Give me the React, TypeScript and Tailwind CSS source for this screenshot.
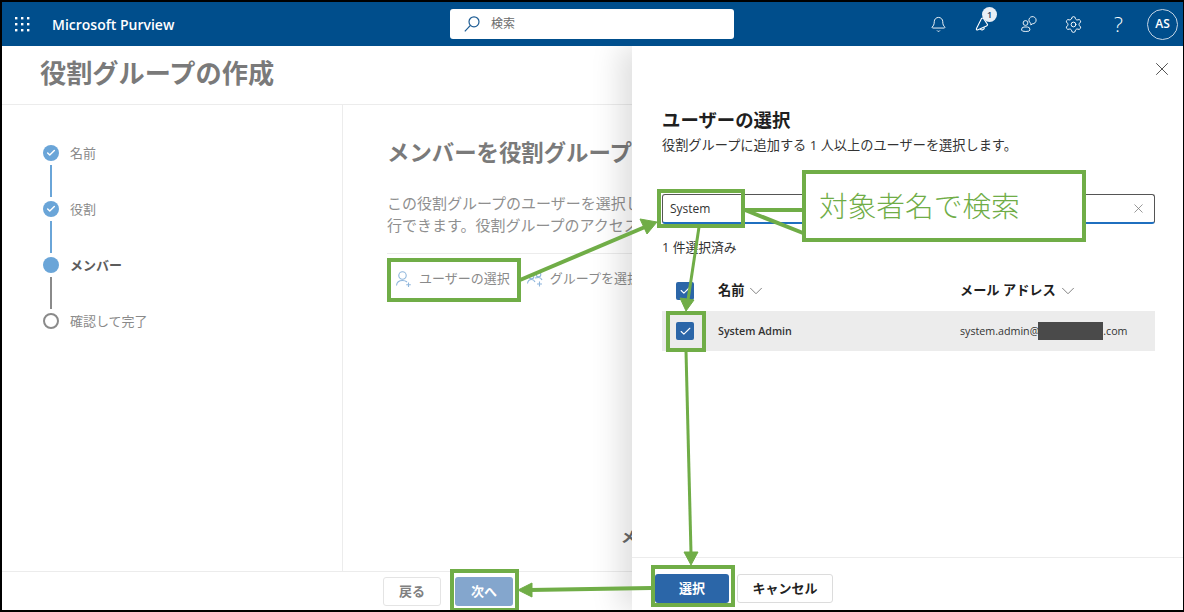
import React from "react";
import { Bell, Settings, X, Check, ChevronDown } from "lucide-react";

const G = "#70ad47";

function Box({ cls }: { cls: string }) {
  return <div className={`absolute border-[4px] border-[#70ad47] ${cls}`} />;
}

function Waffle() {
  return (
    <svg width="16" height="16" viewBox="0 0 16 16" fill="white">
      {[1, 7, 13].map((y) =>
        [1, 7, 13].map((x) => <rect key={`${x}-${y}`} x={x} y={y} width="2.4" height="2.4" />)
      )}
    </svg>
  );
}

function SearchGlyph() {
  return (
    <svg width="18" height="18" viewBox="0 0 18 18" fill="none" stroke="#1d5c94" strokeWidth="1.2">
      <circle cx="11" cy="6.8" r="5" />
      <path d="M7.4 10.4 L1.8 16.4" />
    </svg>
  );
}

function Megaphone() {
  return (
    <svg width="20" height="20" viewBox="0 0 20 20" fill="none" stroke="white" strokeWidth="1.1">
      <path d="M2.5 14.5 L7.5 4.5 Q8.5 3.5 9.5 4.5 L13.5 10.5 Q13.5 11.5 12.5 12 L3.5 16 Q2 16 2.5 14.5Z" />
      <path d="M6 15 A2.6 2.6 0 0 0 10.5 13.5" />
    </svg>
  );
}

function People() {
  return (
    <svg width="18" height="18" viewBox="0 0 18 18" fill="none" stroke="white" strokeWidth="0.9">
      <circle cx="5.5" cy="8" r="2.4" />
      <path d="M1.5 15 Q1.5 12 4 12 H7.5 Q10 12 10 15 Q10 16.5 5.8 16.5 Q1.5 16.5 1.5 15Z" />
      <path d="M9 6 A3.6 3.6 0 1 1 12.5 8.8 L10.8 10 L11 8.4 A3.6 3.6 0 0 1 9 6Z" />
    </svg>
  );
}

function UserPlus() {
  return (
    <svg width="18" height="18" viewBox="0 0 18 18" fill="none" stroke="#8fb6dc" strokeWidth="1.1">
      <circle cx="7.5" cy="5.5" r="3.7" />
      <path d="M1.5 15.5 Q2 10.5 7.5 10.5 Q10.5 10.5 12 12" />
      <path d="M13.5 12.5 V17 M11.2 14.8 H15.8" />
    </svg>
  );
}

function GroupPlus() {
  return (
    <svg width="18" height="18" viewBox="0 0 18 18" fill="none" stroke="#8fb6dc" strokeWidth="1.1">
      <circle cx="5.5" cy="6.5" r="2.3" />
      <circle cx="12.5" cy="4.5" r="2.3" />
      <path d="M1.5 13.5 Q2 9.5 5.5 9.5 Q8 9.5 9 12" />
      <path d="M9 8 Q10.5 7.5 12.5 7.5 Q15 7.5 16 10" />
      <path d="M13.5 11.5 V16.5 M11 14 H16" />
    </svg>
  );
}

function StepDot({ kind }: { kind: "done" | "current" | "todo" }) {
  if (kind === "todo") {
    return <div className="w-[16px] h-[16px] rounded-full border-[2px] border-[#8a8a8a] bg-white" />;
  }
  return (
    <div className="w-[16px] h-[16px] rounded-full bg-[#6aa5d8] flex items-center justify-center">
      {kind === "done" && <Check size={10} color="white" strokeWidth={3.5} />}
    </div>
  );
}

const steps: { label: string; kind: "done" | "current" | "todo"; line?: string }[] = [
  { label: "名前", kind: "done", line: "bg-[#6aa5d8]" },
  { label: "役割", kind: "done", line: "bg-[#6aa5d8]" },
  { label: "メンバー", kind: "current", line: "bg-[#8a8a8a]" },
  { label: "確認して完了", kind: "todo" },
];

function CheckBox() {
  return (
    <div className="w-[18px] h-[18px] rounded-[2px] bg-[#2b66a8] flex items-center justify-center">
      <Check size={13} color="white" strokeWidth={2} />
    </div>
  );
}

export default function App() {
  return (
    <div className="relative w-[1184px] h-[612px] overflow-hidden bg-white flex flex-col border-t-2 border-l-2 border-b-2 border-r border-black font-['Open_Sans','Noto_Sans_CJK_JP',sans-serif]">
      {/* Top bar */}
      <header className="relative z-20 h-[44px] shrink-0 bg-[#004e8c] flex items-center text-white">
        <div className="w-[50px] pl-[12px] flex items-center"><Waffle /></div>
        <div className="w-[123px] text-[14px] font-semibold whitespace-nowrap">Microsoft Purview</div>
        <div className="ml-[275px] w-[284px] h-[30px] bg-white rounded-[3px] flex items-center pl-[13px] gap-[10px] text-[#6b6b6b] text-[12px]">
          <SearchGlyph />
          <span>検索</span>
        </div>
        <div className="flex-1" />
        <div className="flex items-center">
          <div className="w-[45px] flex justify-center"><Bell size={17} color="white" strokeWidth={1.3} /></div>
          <div className="relative w-[45px] flex justify-center">
            <Megaphone />
            <div className="absolute -top-[7px] left-[21px] w-[15px] h-[15px] rounded-full bg-[#e8eef5] text-[#1b3a5c] text-[9px] font-semibold flex items-center justify-center">1</div>
          </div>
          <div className="w-[45px] flex justify-center"><People /></div>
          <div className="w-[45px] flex justify-center"><Settings size={19} color="white" strokeWidth={1.2} /></div>
          <div className="w-[45px] flex justify-center text-[21px] font-light leading-none">?</div>
          <div className="w-[31px] h-[31px] ml-[6px] mr-[5px] rounded-full border border-[#c5d5e5] flex items-center justify-center text-[12px] font-semibold">AS</div>
        </div>
      </header>

      {/* Title */}
      <div className="h-[59px] shrink-0 border-b border-[#ececec] pl-[38px] flex items-center">
        <h1 className="text-[26.2px] font-bold text-[#7a7a7a] leading-none pb-[3px]">役割グループの作成</h1>
      </div>

      {/* Body */}
      <div className="flex-1 flex min-h-0">
        <aside className="w-[341px] shrink-0 border-r border-[#ececec] pt-[40px] pl-[41px]">
          {steps.map((s) => (
            <div key={s.label} className="flex gap-[11px]">
              <div className="w-[16px] flex flex-col items-center">
                <StepDot kind={s.kind} />
                {s.line && <div className={`w-[2px] h-[32px] my-[4px] ${s.line}`} />}
              </div>
              <div className={`text-[13px] leading-[16px] ${s.kind === "current" ? "font-semibold text-[#5c5c5c]" : "text-[#8a8a8a]"}`}>{s.label}</div>
            </div>
          ))}
        </aside>
        <main className="flex-1 flex flex-col pl-[44px] pt-[32px] pb-[24px] min-w-0 overflow-hidden">
          <h2 className="text-[22.4px] leading-[32px] font-bold text-[#7a7a7a] whitespace-nowrap">メンバーを役割グループに</h2>
          <p className="mt-[23px] text-[15px] leading-[22px] text-[#8f8f8f] whitespace-nowrap">
            この役割グループのユーザーを選択し<br />行できます。役割グループのアクセス
          </p>
          <div className="mt-[17px] border-t border-[#ececec] pt-[10px] flex items-center h-[40px] text-[13px] text-[#8a8a8a] whitespace-nowrap">
            <span className="ml-[8px] mr-[6px]"><UserPlus /></span>
            <span>ユーザーの選択</span>
            <span className="ml-[16px] mr-[6px]"><GroupPlus /></span>
            <span>グループを選択</span>
          </div>
          <div className="mt-auto ml-[234px] text-[15px] font-semibold text-[#6a6a6a] whitespace-nowrap">メンバーなし</div>
        </main>
      </div>

      {/* Footer */}
      <footer className="h-[39px] shrink-0 border-t border-[#ececec] flex items-start pt-[5px] pl-[381px] gap-[14px] text-[13px]">
        <button className="w-[58px] h-[29px] rounded-[3px] border border-[#e4e4e4] text-[#808080] font-semibold">戻る</button>
        <button className="w-[58px] h-[29px] rounded-[3px] bg-[#84a6cd] text-white font-semibold">次へ</button>
      </footer>

      {/* Side panel */}
      <section className="absolute z-10 left-[630px] top-[44px] right-0 bottom-0 bg-white shadow-[-12px_0_28px_rgba(0,0,0,0.13)] flex flex-col">
        <div className="flex justify-end pt-[12px] pr-[10px] h-[62px]">
          <X size={22} color="#444" strokeWidth={1} />
        </div>
        <div className="flex-1 pl-[30px] pr-[28px] flex flex-col">
          <h3 className="text-[18.4px] font-bold leading-[24px] text-[#1f1f1f]">ユーザーの選択</h3>
          <p className="mt-[3px] text-[13.2px] leading-[20px] text-[#333]">役割グループに追加する 1 人以上のユーザーを選択します。</p>
          <div className="mt-[39px] h-[30px] rounded-[3px] border border-[#555] border-b-2 border-b-[#1f6fbf] flex items-center pl-[7px] pr-[8px] text-[12px] text-[#333]">
            <span className="flex-1 pt-[1px]">System</span>
            <X size={15} color="#777" strokeWidth={1.2} />
          </div>
          <div className="mt-[13px] text-[12.8px] leading-[20px] text-[#333]">1 件選択済み</div>
          <div className="mt-[12px] h-[42px] pt-[1px] flex items-center text-[13.2px] font-bold text-[#1f1f1f]">
            <div className="w-[56px] pl-[14px]"><CheckBox /></div>
            <div className="w-[242px] flex items-center gap-[1px]">名前 <ChevronDown size={22} color="#777" strokeWidth={1} /></div>
            <div className="flex items-center gap-[1px]">メール アドレス <ChevronDown size={22} color="#777" strokeWidth={1} /></div>
          </div>
          <div className="h-[40px] bg-[#ececec] flex items-center text-[10.7px] text-[#333]">
            <div className="w-[56px] pl-[14px]"><CheckBox /></div>
            <div className="w-[242px] font-semibold">System Admin</div>
            <div className="flex items-center">
              <span>system.admin@</span>
              <span className="w-[65px] h-[18px] bg-[#4a4a4a] -ml-[1px] blur-[0.5px]" />
              <span>.com</span>
            </div>
          </div>
        </div>
        <div className="h-[53px] shrink-0 border-t border-[#ececec] flex items-start pt-[16px] pl-[23px] gap-[8px] text-[13px] font-semibold">
          <button className="w-[74px] h-[29px] rounded-[3px] bg-[#2b66a8] text-white">選択</button>
          <button className="w-[96px] h-[29px] rounded-[3px] border border-[#dcdcdc] text-[#222]">キャンセル</button>
        </div>
      </section>

      {/* Annotations */}
      <div className="absolute z-30 left-[800px] top-[168px] w-[284px] h-[72px] bg-white border-[4px] border-[#70ad47] flex items-center pl-[13px] text-[28.7px] font-light text-[#70ad47] whitespace-nowrap">対象者名で検索</div>
      <Box cls="z-30 left-[385px] top-[256px] w-[134px] h-[44px]" />
      <Box cls="z-30 left-[655px] top-[187px] w-[88px] h-[39px]" />
      <Box cls="z-30 left-[664px] top-[309px] w-[40px] h-[41px]" />
      <Box cls="z-30 left-[649px] top-[563px] w-[84px] h-[42px]" />
      <Box cls="z-30 left-[448px] top-[567px] w-[69px] h-[43px]" />
      <svg className="absolute z-30 left-0 top-0 pointer-events-none" width="1182" height="610" viewBox="2 2 1182 610" fill="none">
        <path d="M520 280 L645 227" stroke={G} strokeWidth="4" />
        <path d="M657 222 L640 219 L647 234Z" fill={G} stroke={G} />
        <path d="M699 227 L688 300" stroke={G} strokeWidth="3" />
        <path d="M686 311 L680 298 L694 300Z" fill={G} stroke={G} />
        <path d="M686 351 L691 553" stroke={G} strokeWidth="3" />
        <path d="M691 565 L684 552 L698 552Z" fill={G} stroke={G} />
        <path d="M651 588 L530 590" stroke={G} strokeWidth="4" />
        <path d="M518 590 L532 583 L532 597Z" fill={G} stroke={G} />
        <path d="M745 210 L803 210 M745 210 L803 233" stroke={G} strokeWidth="4" />
      </svg>
    </div>
  );
}
